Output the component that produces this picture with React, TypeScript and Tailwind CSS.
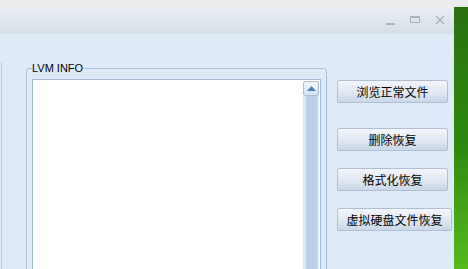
const BUTTONS = [
  { label: "浏览正常文件", w: "w-[111px]", mt: "mt-0" },
  { label: "删除恢复", w: "w-[111px]", mt: "mt-[25px]" },
  { label: "格式化恢复", w: "w-[111px]", mt: "mt-[17px]" },
  { label: "虚拟硬盘文件恢复", w: "w-[115px]", mt: "mt-[17px]" },
];

function TitleBar() {
  return (
    <div className="h-[27px] flex items-center justify-end pr-[9px] gap-[15px] bg-gradient-to-b from-[#e9edf2] via-[#dfe5ec] to-[#d6dee8] rounded-tr-[4px]">
      <div className="w-[9px] h-[2px] mt-[6px] bg-[#aab3bd]" />
      <div className="w-[10px] h-[7px] mt-[-2px] border border-[#aab3bd] border-t-[2px]" />
      <svg width="10" height="10" viewBox="0 0 10 10" className="mt-[-1px]">
        <path d="M1 1 L9 9 M9 1 L1 9" stroke="#aab3bd" strokeWidth="1.3" />
      </svg>
    </div>
  );
}

function Scrollbar() {
  return (
    <div className="w-[16px] mt-[1px] mr-[1px] flex flex-col">
      <div className="h-[15px] border border-[#a9bdd7] rounded-[2px] bg-gradient-to-b from-[#f4f8fc] to-[#d3e1f1] flex items-center justify-center">
        <svg width="9" height="5" viewBox="0 0 9 5">
          <path d="M0 5 L4.5 0 L9 5 Z" fill="#4f7db8" />
        </svg>
      </div>
      <div className="flex-1 flex bg-[#dde9f6]">
        <div className="w-[3px]" />
        <div className="flex-1 bg-[#b9cfea]" />
        <div className="w-[2px] bg-[#d3e2f3]" />
      </div>
    </div>
  );
}

export default function App() {
  return (
    <div className="w-[468px] h-[269px] overflow-hidden bg-[#ebebeb] flex flex-col" style={{ fontFamily: '"Liberation Sans", "Noto Sans CJK SC", sans-serif' }}>
      <div className="h-[7px] shrink-0" />
      <div className="flex flex-1">
        <div className="w-[454px] flex flex-col">
          <TitleBar />
          <div className="flex-1 bg-[#dfeaf8] flex pt-[28px]">
            <div className="w-[2px] border-r border-[#b6c9df]" />
            <fieldset className="ml-[24px] w-[301px] h-[220px] shrink-0 border border-[#a9bed7] rounded-[3px] px-[5px] pt-[5px]">
              <legend className="text-[11px] leading-[12px] text-black">LVM INFO</legend>
              <div className="h-[200px] border border-[#a3b8d2] bg-white flex">
                <div className="flex-1" />
                <Scrollbar />
              </div>
            </fieldset>
            <div className="ml-[10px] mt-[18px] flex flex-col items-start">
              {BUTTONS.map((b) => (
                <button
                  key={b.label}
                  className={`${b.w} ${b.mt} h-[23px] border border-[#afbfd3] rounded-[2px] bg-gradient-to-b from-[#f3f6fa] via-[#e2e9f2] to-[#c9d7e9] text-[12px] leading-none text-black`}
                  style={{ fontFamily: '"Noto Sans CJK SC", sans-serif' }}
                >
                  {b.label}
                </button>
              ))}
            </div>
          </div>
        </div>
        <div className="flex-1 bg-gradient-to-b from-[#27720d] via-[#2f8810] to-[#5cc01f]" />
      </div>
    </div>
  );
}
